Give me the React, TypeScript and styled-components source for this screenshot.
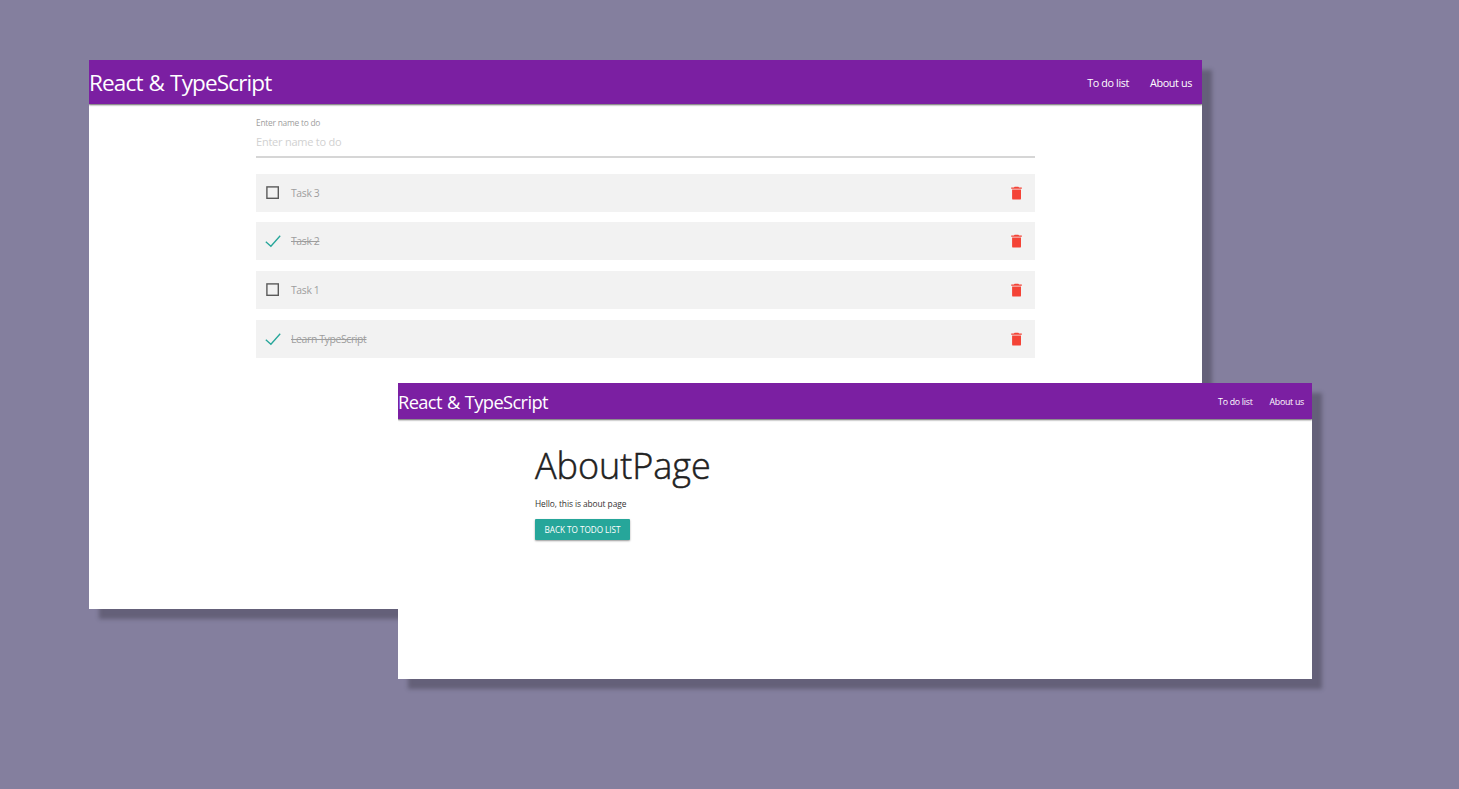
import React from "react";
import styled, { createGlobalStyle, css } from "styled-components";

const GlobalStyle = createGlobalStyle`
  * { box-sizing: border-box; }
  body {
    margin: 0;
    background: #847f9e;
    font-family: "Open Sans", "Noto Sans", sans-serif;
    color: rgba(0, 0, 0, 0.87);
  }
`;

const Desktop = styled.main`
  position: relative;
  width: 1459px;
  height: 789px;
  overflow: hidden;
  background: #847f9e;
`;

const windowBase = css`
  position: absolute;
  background: #fff;
  box-shadow: 10px 10px 4px rgba(51, 47, 61, 0.38);
`;

const TodoWindow = styled.section`
  ${windowBase}
  left: 89px;
  top: 60px;
  width: 1113px;
  height: 549px;
`;

const AboutWindow = styled.section`
  ${windowBase}
  left: 398px;
  top: 383px;
  width: 914px;
  height: 296px;
`;

const Nav = styled.nav<{ $small?: boolean }>`
  display: flex;
  align-items: center;
  justify-content: space-between;
  height: ${(p) => (p.$small ? 36 : 44)}px;
  padding-right: ${(p) => (p.$small ? 8 : 10)}px;
  background: #7b1fa2;
  color: #fff;
  white-space: nowrap;
  clip-path: inset(0 0 -4px 0);
  box-shadow: 0 1px 2px rgba(0, 0, 0, 0.45), 0 1px 1px rgba(0, 0, 0, 0.2);
`;

const Brand = styled.span<{ $small?: boolean }>`
  font-size: ${(p) => (p.$small ? 18.3 : 22.5)}px;
  letter-spacing: ${(p) => (p.$small ? -0.62 : -0.85)}px;
  word-spacing: 1px;
`;

const Links = styled.div<{ $small?: boolean }>`
  display: flex;
  gap: ${(p) => (p.$small ? 17 : 21)}px;
  padding-top: 1px;
  font-size: ${(p) => (p.$small ? 8.8 : 10.8)}px;
  letter-spacing: ${(p) => (p.$small ? -0.27 : -0.38)}px;
`;

const Content = styled.div`
  width: 779px;
  margin-left: 167px;
`;

const Field = styled.div`
  display: flex;
  flex-direction: column;
  height: 54px;
  margin-bottom: 15.5px;
  border-bottom: 2px solid #d6d6d6;
  letter-spacing: -0.23px;
  white-space: nowrap;
`;

const FieldLabel = styled.label`
  margin-top: 12px;
  font-size: 8.4px;
  line-height: 14px;
  color: #9e9e9e;
`;

const Placeholder = styled.span`
  margin-top: 4px;
  font-size: 11px;
  line-height: 16px;
  color: #d1d1d1;
`;

const List = styled.ul`
  display: flex;
  flex-direction: column;
  gap: 10.7px;
  margin: 0;
  padding: 0;
  list-style: none;
`;

const Task = styled.li`
  display: flex;
  align-items: center;
  height: 38px;
  padding: 0 12px 0 9px;
  background: #f2f2f2;
`;

const Mark = styled.svg`
  width: 16px;
  height: 16px;
  margin-right: 10px;
`;

const TaskName = styled.span<{ $done: boolean }>`
  flex: 1;
  font-size: 10.4px;
  letter-spacing: -0.35px;
  color: #9e9e9e;
  text-decoration: ${(p) => (p.$done ? "line-through" : "none")};
`;

const Trash = styled.svg`
  width: 13px;
  height: 16px;
`;

const AboutContent = styled.div`
  display: flex;
  flex-direction: column;
  align-items: flex-start;
  margin-left: 137px;
  padding-top: 23px;
  white-space: nowrap;
`;

const Title = styled.h1`
  margin: 0;
  font-size: 36px;
  line-height: 48px;
  font-weight: 300;
  letter-spacing: -0.05px;
  -webkit-text-stroke: 0.5px #212121;
  color: #212121;
`;

const Paragraph = styled.p`
  margin: 7px 0 0;
  font-size: 8.4px;
  line-height: 14px;
  letter-spacing: -0.08px;
  color: #333;
`;

const BackButton = styled.button`
  width: 95px;
  height: 21px;
  margin-top: 8px;
  padding: 0 0 1px;
  border: 0;
  border-radius: 1px;
  background: #26a69a;
  color: #fff;
  font: 8.2px "Open Sans", "Noto Sans", sans-serif;
  letter-spacing: -0.05px;
  text-transform: uppercase;
  white-space: nowrap;
  box-shadow: 0 1px 2px rgba(0, 0, 0, 0.4);
`;

const tasks = [
  { name: "Task 3", done: false },
  { name: "Task 2", done: true },
  { name: "Task 1", done: false },
  { name: "Learn TypeScript", done: true },
];

function Header({ small }: { small?: boolean }) {
  return (
    <Nav $small={small}>
      <Brand $small={small}>React &amp; TypeScript</Brand>
      <Links $small={small}>
        <span>To do list</span>
        <span>About us</span>
      </Links>
    </Nav>
  );
}

function CheckMark({ done }: { done: boolean }) {
  return (
    <Mark viewBox="0 0 16 16" fill="none">
      {done ? (
        <path d="M.8 8.8 5.900 13.300 15.200 2.700" stroke="#26a69a" strokeWidth="1.3" />
      ) : (
        <rect x="1.9" y="1.900" width="11.4" height="11.4" stroke="#5a5a5a" strokeWidth="1.4" />
      )}
    </Mark>
  );
}

export default function App() {
  return (
    <Desktop>
      <GlobalStyle />
      <TodoWindow>
        <Header />
        <Content>
          <Field>
            <FieldLabel>Enter name to do</FieldLabel>
            <Placeholder>Enter name to do</Placeholder>
          </Field>
          <List>
            {tasks.map((task) => (
              <Task key={task.name}>
                <CheckMark done={task.done} />
                <TaskName $done={task.done}>{task.name}</TaskName>
                <Trash viewBox="0 0 13 16" fill="#f44336">
                  <path d="M2.100 4.600h8.900v8.800q0 1.200-1.200 1.200H3.300Q2.100 14.600 2.100 13.400zM1.200 2.500h2.700l.8-.8h3.600l.8.8h2.700v1.300H1.200z" />
                </Trash>
              </Task>
            ))}
          </List>
        </Content>
      </TodoWindow>
      <AboutWindow>
        <Header small />
        <AboutContent>
          <Title>AboutPage</Title>
          <Paragraph>Hello, this is about page</Paragraph>
          <BackButton>Back to todo list</BackButton>
        </AboutContent>
      </AboutWindow>
    </Desktop>
  );
}
